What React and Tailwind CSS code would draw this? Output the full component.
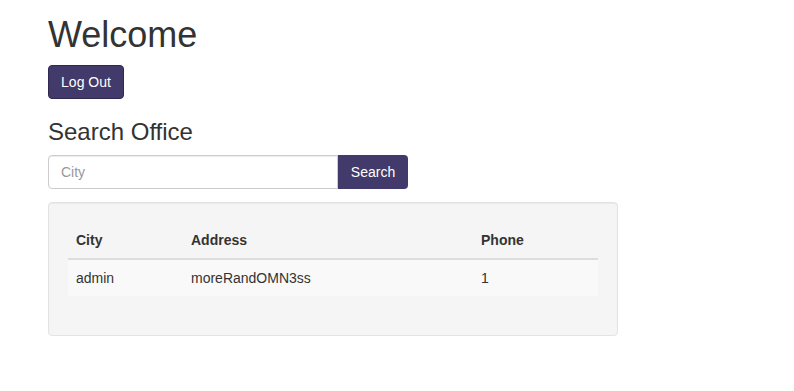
export default function App() {
  const offices = [{ city: 'admin', address: 'moreRandOMN3ss', phone: '1' }];

  return (
    <div className="min-h-[391px] bg-white font-['Liberation_Sans',Arial,sans-serif] text-[14px] leading-[20px] text-[#333]">
      <div className="w-[570px] ml-[48px] pt-[15px]">
        <h1 className="text-[36px] leading-[39.6px] mb-[10px]">Welcome</h1>
        <button
          type="button"
          className="h-[34px] w-[76px] rounded-[4px] border border-[#2f2950] bg-[#413a6b] px-3 text-[14px] text-white"
        >
          Log Out
        </button>

        <h3 className="mt-[20px] mb-[10px] text-[24px] leading-[26.4px]">Search Office</h3>
        <div className="flex w-[360px]">
          <input
            type="text"
            placeholder="City"
            className="h-[34px] w-[290px] rounded-l-[4px] border border-[#ccc] px-3 text-[14px] placeholder:text-[#999] outline-none shadow-[inset_0_1px_1px_rgba(0,0,0,0.075)]"
          />
          <button
            type="button"
            className="h-[34px] w-[70px] rounded-r-[4px] bg-[#413a6b] text-[14px] text-white"
          >
            Search
          </button>
        </div>

        <div className="mt-[13px] rounded-[4px] border border-[#e3e3e3] bg-[#f5f5f5] p-[19px] shadow-[inset_0_1px_1px_rgba(0,0,0,0.05)]">
          <table className="mb-[20px] w-full border-collapse text-left">
            <thead>
              <tr className="border-b-2 border-[#ddd]">
                <th className="w-[115px] p-2 font-bold">City</th>
                <th className="w-[290px] p-2 font-bold">Address</th>
                <th className="p-2 font-bold">Phone</th>
              </tr>
            </thead>
            <tbody>
              {offices.map((o) => (
                <tr key={o.city} className="bg-[#f9f9f9]">
                  <td className="p-2">{o.city}</td>
                  <td className="p-2">{o.address}</td>
                  <td className="p-2">{o.phone}</td>
                </tr>
              ))}
            </tbody>
          </table>
        </div>
      </div>
    </div>
  );
}
